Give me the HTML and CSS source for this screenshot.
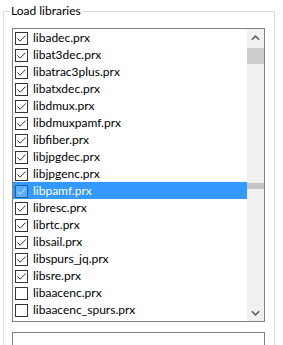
FILE: index.html
```html
<!DOCTYPE html>
<html>
<head>
<meta charset="utf-8">
<link rel="stylesheet" href="styles.css">
</head>
<body>
<fieldset class="group">
  <legend class="legend">Load libraries</legend>
  <div class="list">
    <ul class="items">
      <li class="item"><span class="cb"><svg viewBox="0 0 11 11"><path d="M1.5 5.5 L4.2 8.2 L9.5 2.6"/></svg></span>libadec.prx</li>
      <li class="item"><span class="cb"><svg viewBox="0 0 11 11"><path d="M1.5 5.5 L4.2 8.2 L9.5 2.6"/></svg></span>libat3dec.prx</li>
      <li class="item"><span class="cb"><svg viewBox="0 0 11 11"><path d="M1.5 5.5 L4.2 8.2 L9.5 2.6"/></svg></span>libatrac3plus.prx</li>
      <li class="item"><span class="cb"><svg viewBox="0 0 11 11"><path d="M1.5 5.5 L4.2 8.2 L9.5 2.6"/></svg></span>libatxdec.prx</li>
      <li class="item"><span class="cb"><svg viewBox="0 0 11 11"><path d="M1.5 5.5 L4.2 8.2 L9.5 2.6"/></svg></span>libdmux.prx</li>
      <li class="item"><span class="cb"><svg viewBox="0 0 11 11"><path d="M1.5 5.5 L4.2 8.2 L9.5 2.6"/></svg></span>libdmuxpamf.prx</li>
      <li class="item"><span class="cb"><svg viewBox="0 0 11 11"><path d="M1.5 5.5 L4.2 8.2 L9.5 2.6"/></svg></span>libfiber.prx</li>
      <li class="item"><span class="cb"><svg viewBox="0 0 11 11"><path d="M1.5 5.5 L4.2 8.2 L9.5 2.6"/></svg></span>libjpgdec.prx</li>
      <li class="item"><span class="cb"><svg viewBox="0 0 11 11"><path d="M1.5 5.5 L4.2 8.2 L9.5 2.6"/></svg></span>libjpgenc.prx</li>
      <li class="item selected"><span class="cb"><svg viewBox="0 0 11 11"><path d="M1.5 5.5 L4.2 8.2 L9.5 2.6"/></svg></span>libpamf.prx</li>
      <li class="item"><span class="cb"><svg viewBox="0 0 11 11"><path d="M1.5 5.5 L4.2 8.2 L9.5 2.6"/></svg></span>libresc.prx</li>
      <li class="item"><span class="cb"><svg viewBox="0 0 11 11"><path d="M1.5 5.5 L4.2 8.2 L9.5 2.6"/></svg></span>librtc.prx</li>
      <li class="item"><span class="cb"><svg viewBox="0 0 11 11"><path d="M1.5 5.5 L4.2 8.2 L9.5 2.6"/></svg></span>libsail.prx</li>
      <li class="item"><span class="cb"><svg viewBox="0 0 11 11"><path d="M1.5 5.5 L4.2 8.2 L9.5 2.6"/></svg></span>libspurs_jq.prx</li>
      <li class="item"><span class="cb"><svg viewBox="0 0 11 11"><path d="M1.5 5.5 L4.2 8.2 L9.5 2.6"/></svg></span>libsre.prx</li>
      <li class="item"><span class="cb"></span>libaacenc.prx</li>
      <li class="item"><span class="cb"></span>libaacenc_spurs.prx</li>
    </ul>
    <div class="scrollbar">
      <div class="sb-btn"><svg viewBox="0 0 9 6"><path d="M0.8 4.8 L4.5 1.2 L8.2 4.8"/></svg></div>
      <div class="sb-track">
        <div class="thumb"></div>
        <div class="thumb ghost"></div>
      </div>
      <div class="sb-btn"><svg viewBox="0 0 9 6"><path d="M0.8 1.2 L4.5 4.8 L8.2 1.2"/></svg></div>
    </div>
  </div>
  <div class="textbox"></div>
</fieldset>
</body>
</html>
```
FILE: styles.css
```css
html, body {
  margin: 0;
  padding: 0;
  background: #ffffff;
  overflow: hidden;
}
body {
  width: 283px;
  height: 345px;
  font-family: Lato, "Noto Sans", sans-serif;
  font-size: 12px;
  color: #000;
}
.group {
  margin: 3px 0 0 3px;
  padding: 8px 0 0 8px;
  width: 262px;
  height: 400px;
  border: 1px solid #dcdcdc;
  box-sizing: content-box;
  min-width: 0;
}
.legend {
  padding: 0 2px;
  margin-left: -3px;
  line-height: 16px;
  font-size: 12px;
}
.list {
  width: 253px;
  height: 294px;
  box-sizing: border-box;
  border: 1px solid #828282;
  display: grid;
  grid-template-columns: 1fr 17px;
  margin-top: 1px;
}
.items {
  list-style: none;
  margin: 0;
  padding: 0;
}
.item {
  height: 17px;
  line-height: 17px;
  display: flex;
  align-items: center;
  gap: 5px;
  padding-left: 2px;
  white-space: nowrap;
}
.item.selected {
  background: #3399ff;
  color: #ffffff;
}
.cb {
  width: 13px;
  height: 13px;
  box-sizing: border-box;
  border: 1px solid #333333;
  background: #ffffff;
  display: flex;
  align-items: center;
  justify-content: center;
  flex: none;
  margin-top: 2px;
}
.cb svg {
  width: 11px;
  height: 11px;
  fill: none;
  stroke: #333333;
  stroke-width: 1;
}
.selected .cb {
  background: #5aacff;
  border-color: #1e5d9c;
}
.selected .cb svg {
  stroke: #d8ecff;
}
.scrollbar {
  background: #f0f0f0;
  display: flex;
  flex-direction: column;
}
.sb-btn {
  height: 17px;
  display: flex;
  align-items: center;
  justify-content: center;
  flex: none;
}
.sb-btn svg {
  width: 9px;
  height: 6px;
  fill: none;
  stroke: #606060;
  stroke-width: 1.6;
}
.sb-track {
  flex: 1;
  display: flex;
  flex-direction: column;
}
.thumb {
  height: 16px;
  margin-top: 2px;
  background: #cdcdcd;
}
.thumb.ghost {
  height: 6px;
  margin-top: 119px;
  background: #c4c4c4;
}
.textbox {
  margin-top: 10px;
  width: 253px;
  height: 40px;
  box-sizing: border-box;
  border: 1px solid #828282;
}
```
